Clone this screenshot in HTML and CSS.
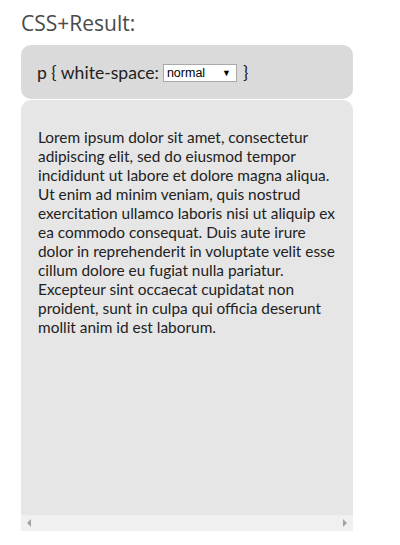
FILE: index.html
```html
<!DOCTYPE html>
<html lang="en">
<head>
    <meta charset="UTF-8">
    <title>CSS+Result</title>
    <link rel="stylesheet" href="styles.css">
</head>
<body>
    <div class="demo">
        <h2 class="title">CSS+Result:</h2>

        <div class="css-panel">
            p { white-space:
            <span class="select-wrap">
                <select class="select">
                    <option>normal</option>
                    <option>nowrap</option>
                    <option>pre</option>
                    <option>pre-wrap</option>
                    <option>pre-line</option>
                </select>
                <span class="select-arrow">&#9660;</span>
            </span>
            }
        </div>

        <div class="result-panel">
            <div class="result-body">
                <p class="lorem">Lorem ipsum dolor sit amet, consectetur adipiscing elit, sed do eiusmod tempor incididunt ut labore et dolore magna aliqua. Ut enim ad minim veniam, quis nostrud exercitation ullamco laboris nisi ut aliquip ex ea commodo consequat. Duis aute irure dolor in reprehenderit in voluptate velit esse cillum dolore eu fugiat nulla pariatur. Excepteur sint occaecat cupidatat non proident, sunt in culpa qui officia deserunt mollit anim id est laborum.</p>
            </div>
            <div class="scrollbar">
                <span class="arrow arrow-left"></span>
                <span class="arrow arrow-right"></span>
            </div>
        </div>
    </div>
</body>
</html>
```

FILE: styles.css
```css
* {
    margin: 0;
    padding: 0;
    box-sizing: border-box;
}

body {
    background: white;
    color: #222;
    font-family: 'Lato', sans-serif;
}

.demo {
    width: 332px;
    margin-left: 21px;
    padding-top: 9px;
}

.title {
    font-family: 'Open Sans', sans-serif;
    font-weight: 400;
    font-size: 21px;
    line-height: 28px;
    color: #4a4a4a;
    margin-bottom: 8px;
}

.css-panel {
    height: 54px;
    background: #dadada;
    border-radius: 10px;
    padding: 0 16px;
    display: flex;
    align-items: center;
    gap: 4px;
    font-size: 17.6px;
    color: #222;
}

.select-wrap {
    position: relative;
    display: inline-block;
    margin: 2px 2px 0 0;
}

.select {
    appearance: none;
    -webkit-appearance: none;
    width: 74px;
    height: 18px;
    border: 1px solid #a9a9a9;
    background: white;
    font-family: 'Liberation Sans', Arial, sans-serif;
    font-size: 12.5px;
    color: #000;
    padding: 0 0 0 3px;
    display: block;
}

.select-arrow {
    position: absolute;
    right: 6px;
    top: 4px;
    font-size: 9px;
    line-height: 10px;
    color: #000;
    pointer-events: none;
}

.result-panel {
    margin-top: 1px;
    height: 431px;
    background: #e6e6e6;
    border-radius: 10px 10px 0 0;
    display: flex;
    flex-direction: column;
}

.result-body {
    flex: 1;
    padding: 28px 13px 0 17px;
}

.lorem {
    font-size: 15.4px;
    line-height: 19px;
    color: #222;
}

.scrollbar {
    height: 16px;
    background: #f0f0f0;
    display: flex;
    justify-content: space-between;
    align-items: center;
    padding: 0 6px;
}

.arrow {
    width: 0;
    height: 0;
    border-top: 4px solid transparent;
    border-bottom: 4px solid transparent;
}

.arrow-left {
    border-right: 4px solid #a3a3a3;
}

.arrow-right {
    border-left: 4px solid #a3a3a3;
}
```
